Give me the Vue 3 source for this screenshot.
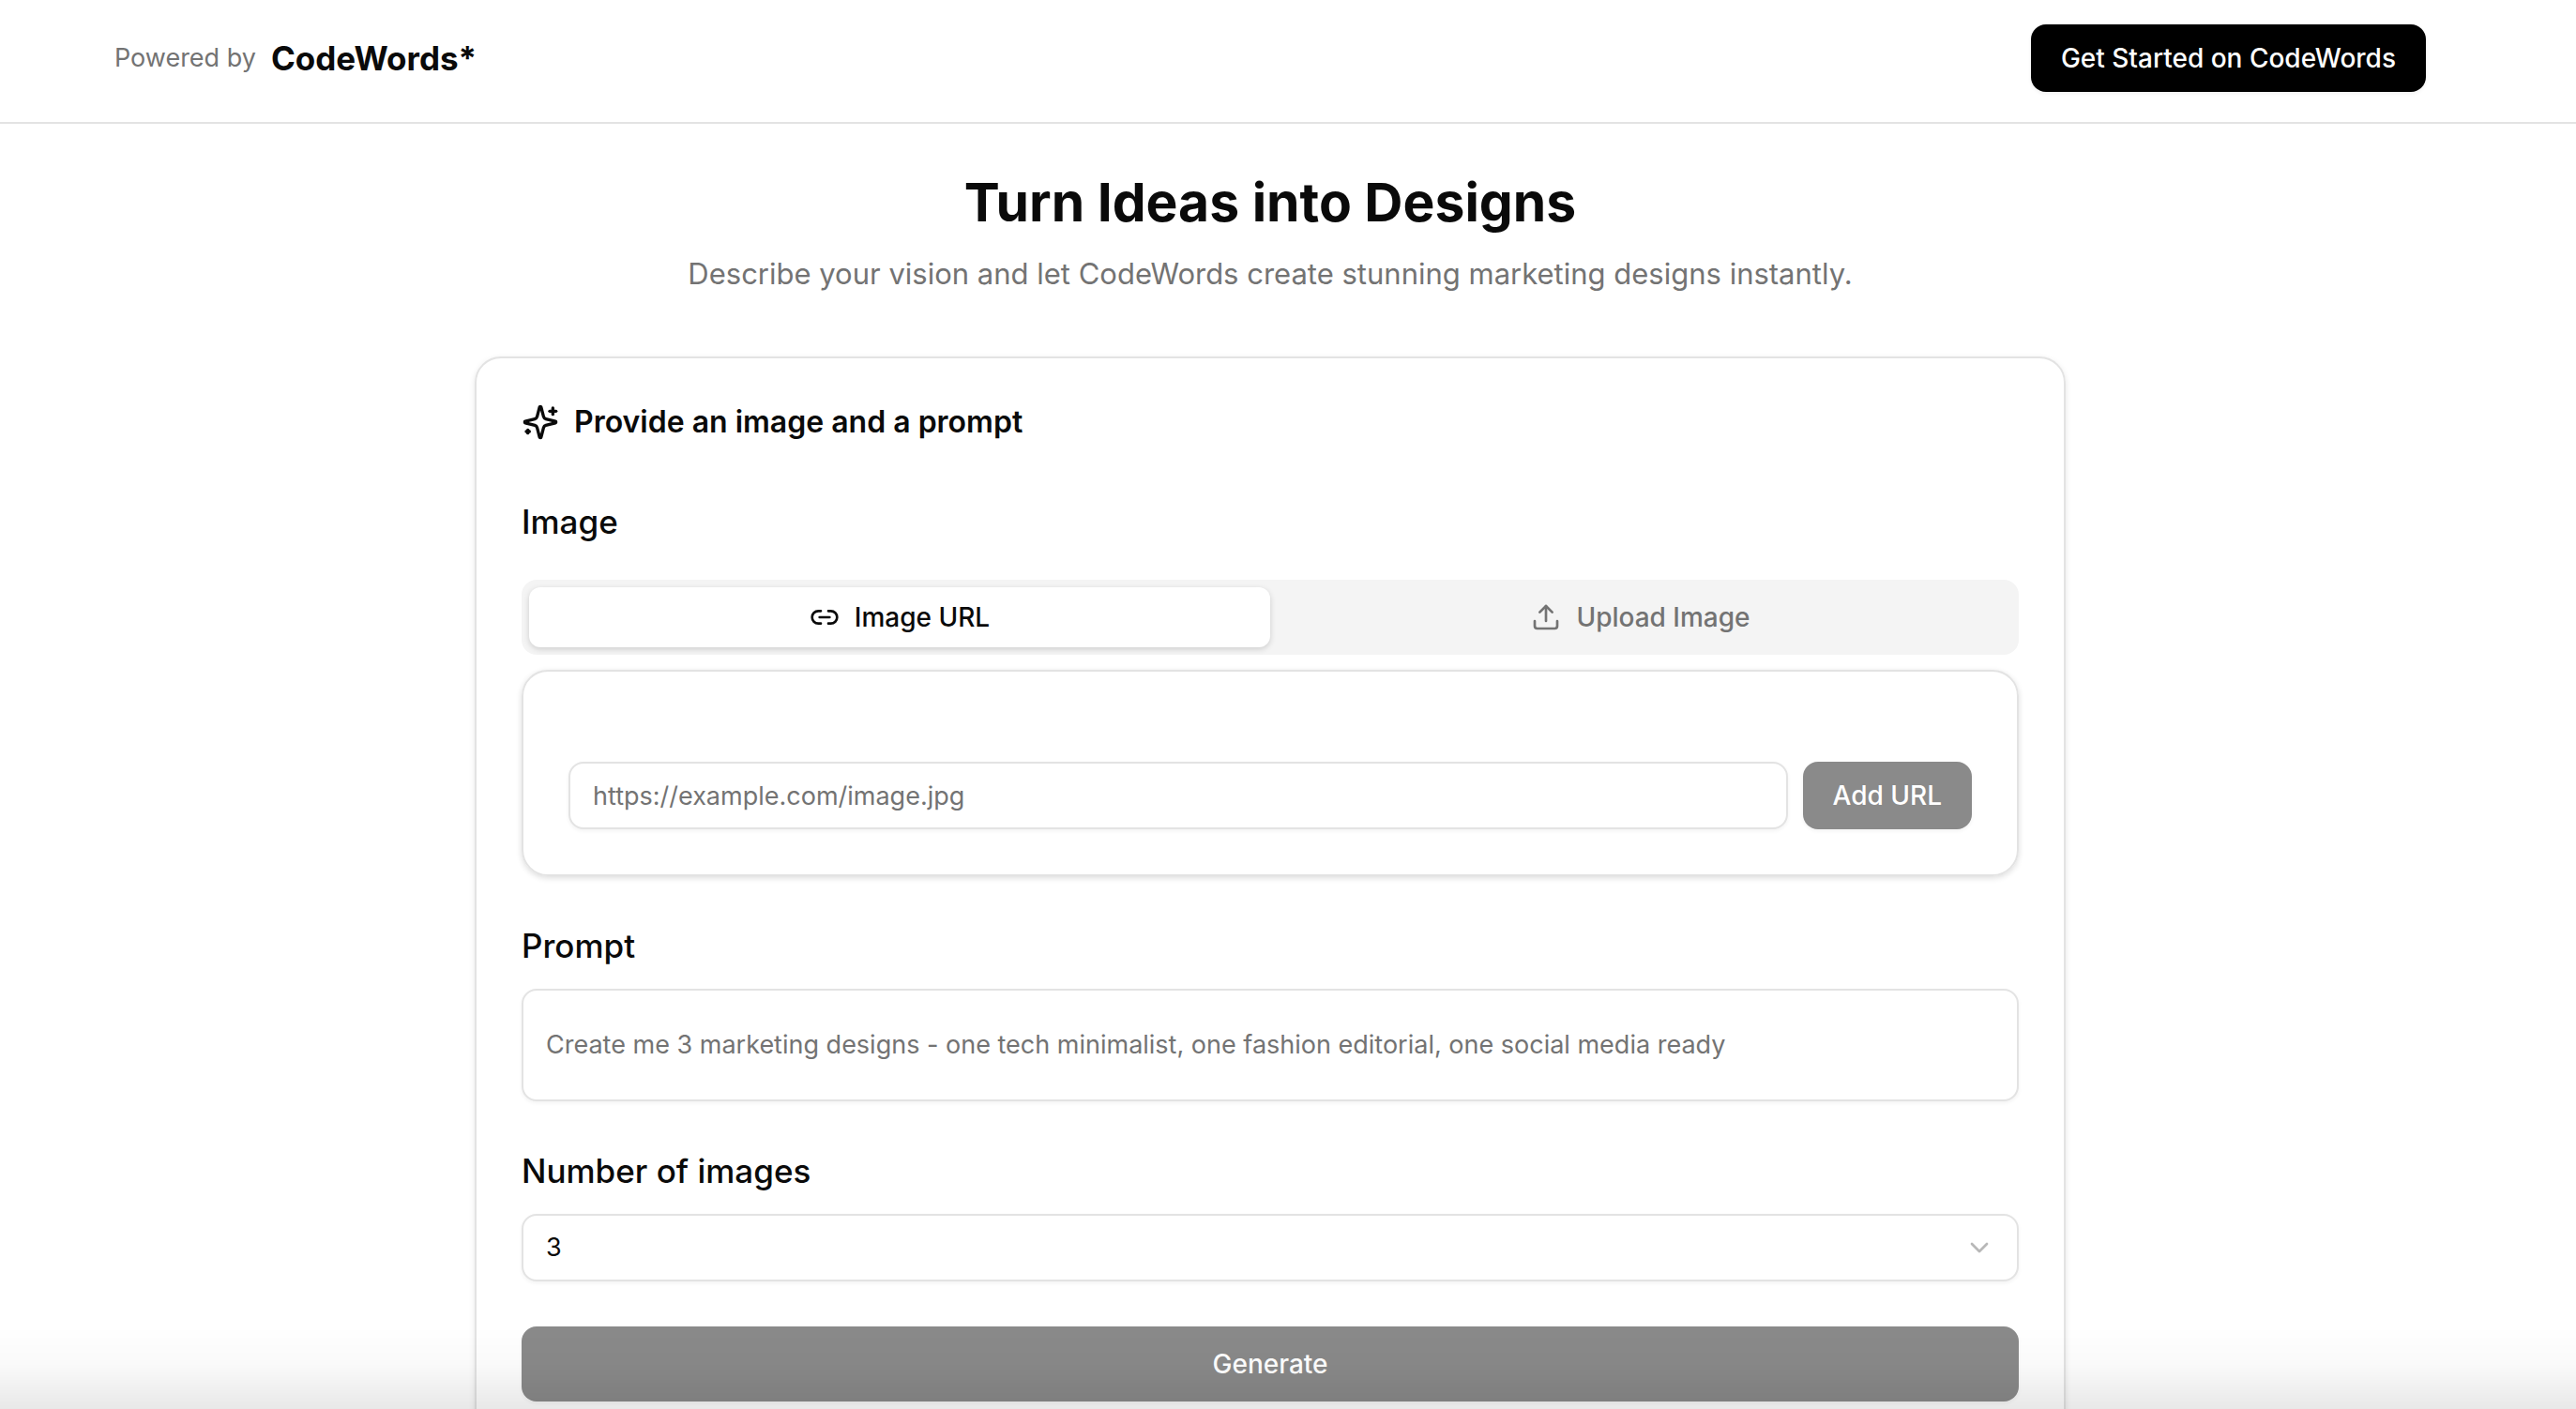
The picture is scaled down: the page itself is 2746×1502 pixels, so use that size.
<script setup>
import { ref } from 'vue'

const tab = ref('url')
const imageUrl = ref('')
const prompt = ref('')
const count = ref('3')
</script>

<template>
  <div class="page">
    <header class="site-header">
      <div class="header-inner">
        <div class="brand">
          <span class="powered">Powered by</span>
          <a class="logo" href="#">CodeWords*</a>
        </div>
        <a class="btn cta" href="#">Get Started on CodeWords</a>
      </div>
    </header>

    <main class="main">
      <section class="hero">
        <h1>Turn Ideas into Designs</h1>
        <p>Describe your vision and let CodeWords create stunning marketing designs instantly.</p>
      </section>

      <form class="card" @submit.prevent>
        <h2 class="card-title">
          <svg class="icon icon-lg" viewBox="0 0 24 24" aria-hidden="true">
            <path d="M9.937 15.5A2 2 0 0 0 8.5 14.063l-6.135-1.582a.5.5 0 0 1 0-.962L8.5 9.936A2 2 0 0 0 9.937 8.5l1.582-6.135a.5.5 0 0 1 .963 0L14.063 8.5A2 2 0 0 0 15.5 9.937l6.135 1.581a.5.5 0 0 1 0 .964L15.5 14.063a2 2 0 0 0-1.437 1.437l-1.582 6.135a.5.5 0 0 1-.963 0z" />
            <path d="M20 3v4" />
            <path d="M22 5h-4" />
            <path d="M4 17v2" />
            <path d="M5 18H3" />
          </svg>
          <span>Provide an image and a prompt</span>
        </h2>

        <div class="field image-field">
          <label class="label" for="image-url">Image</label>
          <div class="tabs-area">
            <div class="tabs" role="tablist">
              <button type="button" role="tab" class="tab" :class="{ active: tab === 'url' }" @click="tab = 'url'">
                <svg class="icon" viewBox="0 0 24 24" aria-hidden="true">
                  <path d="M9 17H7A5 5 0 0 1 7 7h2" />
                  <path d="M15 7h2a5 5 0 1 1 0 10h-2" />
                  <path d="M8 12h8" />
                </svg>
                <span>Image URL</span>
              </button>
              <button type="button" role="tab" class="tab" :class="{ active: tab === 'upload' }" @click="tab = 'upload'">
                <svg class="icon" viewBox="0 0 24 24" aria-hidden="true">
                  <path d="M12 3v12" />
                  <path d="m17 8-5-5-5 5" />
                  <path d="M21 15v4a2 2 0 0 1-2 2H5a2 2 0 0 1-2-2v-4" />
                </svg>
                <span>Upload Image</span>
              </button>
            </div>
            <div class="url-card">
              <input id="image-url" v-model="imageUrl" class="control" type="text" placeholder="https://example.com/image.jpg" />
              <button type="button" class="btn muted">Add URL</button>
            </div>
          </div>
        </div>

        <div class="field">
          <label class="label" for="prompt">Prompt</label>
          <textarea id="prompt" v-model="prompt" class="control prompt" rows="1" placeholder="Create me 3 marketing designs - one tech minimalist, one fashion editorial, one social media ready"></textarea>
        </div>

        <div class="field">
          <label class="label" for="count">Number of images</label>
          <div class="select-wrap">
            <select id="count" v-model="count" class="control">
              <option>1</option>
              <option>2</option>
              <option>3</option>
              <option>4</option>
            </select>
            <svg class="icon chevron" viewBox="0 0 24 24" aria-hidden="true">
              <path d="m6 9 6 6 6-6" />
            </svg>
          </div>
        </div>

        <button type="submit" class="btn muted generate">Generate</button>
      </form>
    </main>
    <div class="fade"></div>
  </div>
</template>

<style>
html,
body {
  margin: 0;
  height: 100%;
  overflow: hidden;
  background: #fff;
}
#app {
  height: 100%;
}
</style>

<style scoped>
.page {
  --ink: #0a0a0a;
  --grey: #737373;
  --line: #e3e3e3;
  height: 100%;
  overflow: hidden;
  box-sizing: border-box;
  color: var(--ink);
  font-family: Inter, "Liberation Sans", sans-serif;
  font-size: 28px;
  line-height: 40px;
}
.page * {
  box-sizing: border-box;
}
.site-header {
  border-bottom: 2px solid var(--line);
}
.header-inner {
  display: flex;
  align-items: center;
  justify-content: space-between;
  max-width: 2560px;
  margin: 0 auto;
  padding: 26px 48px 32px;
}
.site-header,
.main {
  padding-right: 38px;
}
.brand {
  display: flex;
  align-items: center;
  gap: 16px;
}
.powered {
  color: var(--grey);
  font-size: 27px;
}
.logo {
  color: var(--ink);
  font-size: 35px;
  font-weight: 700;
  text-decoration: none;
}
.btn {
  display: inline-flex;
  align-items: center;
  justify-content: center;
  height: 72px;
  padding: 0 32px;
  border: 0;
  border-radius: 16px;
  color: #fff;
  font: inherit;
  font-weight: 500;
  text-decoration: none;
  white-space: nowrap;
  box-shadow: 0 2px 4px rgba(0, 0, 0, 0.05);
}
.cta {
  background: #000;
}
.muted {
  background: #8a8a8a;
}
.hero {
  padding-top: 48px;
  text-align: center;
}
.hero h1 {
  margin: 0;
  font-size: 57px;
  font-weight: 700;
  line-height: 72px;
}
.hero p {
  margin: 12px 0 0;
  color: var(--grey);
  font-size: 31px;
  line-height: 56px;
}
.card {
  display: flex;
  flex-direction: column;
  gap: 48px;
  max-width: 1696px;
  margin: 60px auto 0;
  padding: 48px 48px 64px;
  border: 2px solid var(--line);
  border-radius: 28px;
  box-shadow: 0 2px 6px rgba(0, 0, 0, 0.1);
}
.card-title {
  display: flex;
  align-items: center;
  gap: 16px;
  margin: 0;
  font-size: 32px;
  font-weight: 600;
  line-height: 40px;
}
.icon {
  flex: none;
  width: 32px;
  height: 32px;
  fill: none;
  stroke: currentColor;
  stroke-width: 2;
  stroke-linecap: round;
  stroke-linejoin: round;
}
.icon-lg {
  width: 40px;
  height: 40px;
}
.field {
  display: flex;
  flex-direction: column;
  gap: 20px;
}
.image-field {
  gap: 36px;
  padding-top: 12px;
}
.label {
  font-size: 35px;
  font-weight: 500;
  line-height: 52px;
}
.tabs-area {
  display: flex;
  flex-direction: column;
  gap: 16px;
}
.tabs {
  display: flex;
  height: 80px;
  padding: 8px;
  border-radius: 16px;
  background: #f4f4f4;
}
.tab {
  display: flex;
  flex: 1;
  align-items: center;
  justify-content: center;
  gap: 16px;
  padding: 0;
  border: 0;
  border-radius: 12px;
  background: none;
  color: var(--grey);
  font: inherit;
  font-weight: 500;
}
.tab.active {
  background: #fff;
  color: var(--ink);
  box-shadow: 0 2px 6px rgba(0, 0, 0, 0.16);
}
.url-card {
  display: flex;
  gap: 16px;
  padding: 96px 48px 48px;
  border: 2px solid var(--line);
  border-radius: 28px;
  box-shadow: 0 2px 6px rgba(0, 0, 0, 0.14);
}
.control {
  flex: 1;
  display: block;
  width: 100%;
  height: 72px;
  padding: 0 24px;
  border: 2px solid var(--line);
  border-radius: 16px;
  outline: 0;
  background: #fff;
  color: var(--ink);
  font: inherit;
  font-size: 27px;
  box-shadow: 0 2px 4px rgba(0, 0, 0, 0.05);
}
.control::placeholder {
  color: var(--grey);
  opacity: 1;
}
.prompt {
  flex: none;
  height: 120px;
  padding: 38px 24px;
  resize: none;
  overflow: hidden;
}
.select-wrap {
  position: relative;
}
select.control {
  appearance: none;
}
.chevron {
  position: absolute;
  top: 20px;
  right: 26px;
  opacity: 0.5;
  color: var(--ink);
  pointer-events: none;
  stroke: #737373;
}
.generate {
  height: 80px;
}
.fade {
  position: fixed;
  right: 0;
  bottom: 0;
  left: 0;
  height: 88px;
  background: linear-gradient(to bottom, rgba(0, 0, 0, 0), rgba(0, 0, 0, 0.02) 45%, rgba(0, 0, 0, 0.09));
  pointer-events: none;
}
</style>
